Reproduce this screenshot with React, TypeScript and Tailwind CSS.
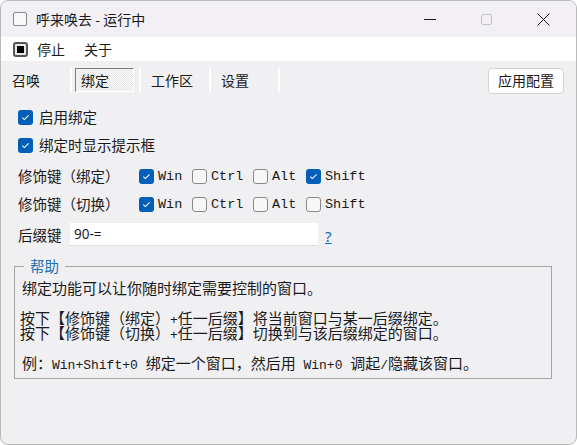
import { ReactNode } from 'react';

const cjk = { fontFamily: '"Noto Sans CJK SC", "Liberation Sans", sans-serif' };
const mono = { fontFamily: '"Liberation Mono", "Noto Sans CJK SC", monospace' };

function Check({ on }: { on: boolean }) {
  if (on) {
    return (
      <span className="w-[15px] h-[15px] rounded-[3px] bg-[#005fb8] flex items-center justify-center shrink-0">
        <svg width="15" height="15" viewBox="0 0 15 15">
          <path d="M4.3 7.6 L6.4 9.6 L10.6 5.4" fill="none" stroke="white" strokeWidth="1.1" />
        </svg>
      </span>
    );
  }
  return <span className="w-[15px] h-[15px] rounded-[3px] border border-[#8a8a8a] bg-[#f7f7f7] shrink-0" />;
}

function Sep() {
  return <div className="w-[2px] h-[24px] border-l border-[#a0a0a0] border-r border-white shrink-0" />;
}

function Mod({ label, on, w }: { label: string; on: boolean; w: string }) {
  return (
    <div className={`flex items-center gap-[4px] ${w}`}>
      <Check on={on} />
      <span className="text-[13.5px] leading-[16px] mt-[2px] text-[#1a1a1a]" style={mono}>{label}</span>
    </div>
  );
}

function ModRow({ title, mods }: { title: string; mods: boolean[] }) {
  return (
    <div className="flex items-center h-[28px]">
      <span className="w-[121px] text-[14.5px] text-[#1a1a1a]">{title}</span>
      <Mod label="Win" on={mods[0]} w="w-[53px]" />
      <Mod label="Ctrl" on={mods[1]} w="w-[61px]" />
      <Mod label="Alt" on={mods[2]} w="w-[53px]" />
      <Mod label="Shift" on={mods[3]} w="w-[70px]" />
    </div>
  );
}

function L({ children }: { children: ReactNode }) {
  return <span className="text-[13px] leading-[0]" style={mono}>{children}</span>;
}

function Line({ children, className = '' }: { children?: ReactNode; className?: string }) {
  return <div className={`h-[15px] leading-[15px] ${className}`}>{children}</div>;
}

export default function App() {
  return (
    <div className="w-[577px] h-[445px] bg-white" style={cjk}>
      <div className="w-[577px] h-[445px] rounded-[8px] border border-[#b9b9b9] bg-[#f0eff2] overflow-hidden flex flex-col">
        {/* Title bar */}
        <div className="h-[36px] bg-[#f2f0f5] flex items-center">
          <span className="ml-[12px] w-[14px] h-[14px] border border-[#8a8a8a] rounded-[2px] bg-[#f8f8f8]" />
          <span className="ml-[9px] text-[14px] text-[#1a1a1a]">呼来唤去 - 运行中</span>
          <div className="ml-auto mr-[4px] flex h-full">
            <div className="w-[57px] flex items-center justify-center">
              <div className="w-[12px] h-[1px] bg-[#1a1a1a]" />
            </div>
            <div className="w-[57px] flex items-center justify-center">
              <div className="w-[11px] h-[11px] border border-[#c4c4c4] rounded-[2px]" />
            </div>
            <div className="w-[57px] flex items-center justify-center">
              <svg width="13" height="13" viewBox="0 0 13 13">
                <path d="M0.5 0.5 L12.5 12.5 M12.5 0.5 L0.5 12.5" stroke="#1a1a1a" strokeWidth="1" />
              </svg>
            </div>
          </div>
        </div>

        {/* Menu bar */}
        <div className="h-[24px] bg-white flex items-center">
          <span className="ml-[12px] w-[15px] h-[15px] border-2 border-[#555] rounded-[3px] bg-[#e8e8e8] flex items-center justify-center">
            <span className="w-[7px] h-[7px] bg-black" />
          </span>
          <span className="ml-[9px] text-[14px] text-[#1a1a1a]">停止</span>
          <span className="ml-[19px] text-[14px] text-[#1a1a1a]">关于</span>
        </div>

        {/* Tab row */}
        <div className="h-[38px] flex items-center pl-[11px] pr-[12px] text-[14px] text-[#1a1a1a]">
          <span className="w-[58px]">召唤</span>
          <Sep />
          <div className="ml-[3px] w-[59px] h-[24px] border border-t-[#7a7a7a] border-l-[#7a7a7a] border-b-white border-r-white pl-[5px] flex items-center bg-[repeating-conic-gradient(#e4e4e4_0_25%,#fbfbfb_0_50%)] bg-[length:2px_2px]">
            绑定
          </div>
          <div className="ml-[5px]"><Sep /></div>
          <span className="ml-[10px] w-[58px]">工作区</span>
          <Sep />
          <span className="ml-[10px] w-[57px]">设置</span>
          <Sep />
          <button className="ml-auto w-[76px] h-[26px] bg-white border border-[#d3d3d3] rounded-[4px] text-[14px] text-[#1a1a1a] mt-[1px]">
            应用配置
          </button>
        </div>

        {/* Content */}
        <div className="pl-[17px] pt-[4px] flex flex-col">
          <div className="flex items-center h-[28px] gap-[6px]">
            <Check on={true} />
            <span className="text-[14.5px] text-[#1a1a1a]">启用绑定</span>
          </div>
          <div className="flex items-center h-[28px] gap-[6px]">
            <Check on={true} />
            <span className="text-[14.5px] text-[#1a1a1a]">绑定时显示提示框</span>
          </div>
          <div className="mt-[3px]">
            <ModRow title="修饰键（绑定）" mods={[true, false, false, true]} />
            <ModRow title="修饰键（切换）" mods={[true, false, false, false]} />
          </div>
          <div className="flex items-center mt-[3px] h-[27px]">
            <span className="w-[52px] text-[14.5px] text-[#1a1a1a]">后缀键</span>
            <div className="w-[248px] h-[23px] bg-white border-b border-[#e0e0e0] flex items-center pl-[4px] text-[13.5px] text-[#1a1a1a]" style={{ fontFamily: '"Noto Sans", sans-serif' }}>
              90-=
            </div>
            <span className="ml-[7px] text-[15px] text-[#0a66c2] underline mt-[4px]" style={{ fontFamily: '"Noto Sans", sans-serif' }}>?</span>
          </div>

          {/* Help group */}
          <div className="relative ml-[-4px] mt-[18px] w-[538px] h-[113px] border border-[#a5a5a5] pl-[7px] pt-[13px]">
            <span className="absolute top-[-11px] left-[9px] px-[6px] bg-[#f0eff2] text-[14.5px] leading-[20px] text-[#1a6fb5]">帮助</span>
            <div className="text-[15px] text-[#1a1a1a] whitespace-pre">
              <Line>绑定功能可以让你随时绑定需要控制的窗口。</Line>
              <Line />
              <Line className="-ml-[2px]">按下【修饰键（绑定）<L>+</L>任一后缀】将当前窗口与某一后缀绑定。</Line>
              <Line className="-ml-[2px]">按下【修饰键（切换）<L>+</L>任一后缀】切换到与该后缀绑定的窗口。</Line>
              <Line />
              <Line>例：<L>Win+Shift+0 </L>绑定一个窗口，然后用<L> Win+0 </L>调起<L>/</L>隐藏该窗口。</Line>
            </div>
          </div>
        </div>
      </div>
    </div>
  );
}
